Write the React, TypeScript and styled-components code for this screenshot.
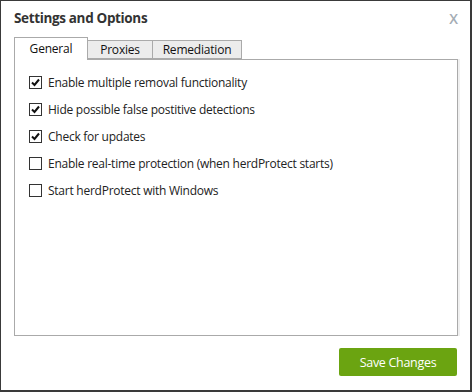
import React from "react";
import styled, { createGlobalStyle } from "styled-components";

const Global = createGlobalStyle`
  html, body { margin: 0; padding: 0; background: #fff; }
  body { font-family: "Open Sans", "Noto Sans", sans-serif; }
`;

const Window = styled.div`
  box-sizing: border-box;
  width: 472px;
  height: 392px;
  border-top: 1px solid #3a3a3a;
  border-left: 1px solid #3a3a3a;
  border-right: 2px solid #3a3a3a;
  border-bottom: 2px solid #3a3a3a;
  background: #fff;
  display: flex;
  flex-direction: column;
  padding: 0 12px 0 13px;
`;

const TitleBar = styled.div`
  display: flex;
  align-items: center;
  justify-content: space-between;
  height: 34px;
  box-sizing: border-box;
`;

const Title = styled.div`
  font-size: 13.5px;
  font-weight: 700;
  color: #333;
  letter-spacing: -0.35px;
`;

const Close = styled.div`
  font-size: 14px;
  font-weight: 600;
  color: #a4acb4;
  margin-right: 0px;
`;

const TabRow = styled.div`
  display: flex;
  align-items: flex-end;
  height: 22px;
  margin-top: 2px;
`;

const Tab = styled.div<{ $active?: boolean; $first?: boolean; $w: number }>`
  box-sizing: border-box;
  height: ${(p) => (p.$active ? "23px" : "19px")};
  width: ${(p) => p.$w}px;
  border: 1px solid #aaa;
  border-bottom: ${(p) => (p.$active ? "none" : "1px solid #aaa")};
  border-left: ${(p) => (p.$first ? "1px solid #aaa" : "none")};
  background: ${(p) => (p.$active ? "#fff" : "#ececec")};
  font-size: 12px;
  letter-spacing: -0.2px;
  color: #111;
  display: flex;
  justify-content: center;
  align-items: ${(p) => (p.$active ? "flex-start" : "center")};
  padding-top: ${(p) => (p.$active ? "2px" : "0")};
  margin-bottom: ${(p) => (p.$active ? "-1px" : "0")};
  position: relative;
  z-index: ${(p) => (p.$active ? 1 : 0)};
`;

const Panel = styled.div`
  box-sizing: border-box;
  width: 444px;
  height: 277px;
  border: 1px solid #aaa;
  box-shadow: 2px 0 0 #f0f0f0;
  padding: 16px 0 0 14px;
  display: flex;
  flex-direction: column;
  gap: 14px;
`;

const Row = styled.label`
  display: flex;
  align-items: center;
  gap: 6px;
  font-size: 12px;
  letter-spacing: -0.25px;
  color: #222;
  height: 13px;
`;

const Box = styled.span`
  box-sizing: border-box;
  width: 13px;
  height: 13px;
  border: 1px solid #333;
  background: #fff;
  display: flex;
  align-items: center;
  justify-content: center;
`;

const Footer = styled.div`
  display: flex;
  justify-content: flex-end;
  padding-top: 12px;
`;

const SaveButton = styled.button`
  width: 118px;
  height: 28px;
  border: none;
  border-radius: 2px;
  background: #6ba411;
  color: #fff;
  font-family: "Open Sans", "Noto Sans", sans-serif;
  font-size: 12.5px;
  letter-spacing: -0.3px;
  cursor: pointer;
  margin-right: 1px;
`;

type T = { label: string; w: number; active?: boolean; first?: boolean };
const tabs: T[] = [
  { label: "General", w: 74, active: true, first: true },
  { label: "Proxies", w: 65 },
  { label: "Remediation", w: 89 },
];

const items = [
  { label: "Enable multiple removal functionality", checked: true },
  { label: "Hide possible false postitive detections", checked: true },
  { label: "Check for updates", checked: true },
  { label: "Enable real-time protection (when herdProtect starts)", checked: false },
  { label: "Start herdProtect with Windows", checked: false },
];

const Check = () => (
  <svg width="9" height="9" viewBox="0 0 9 9">
    <path d="M1 4.5 L3.5 7 L8 1.5" stroke="#111" strokeWidth="2" fill="none" />
  </svg>
);

export default function App() {
  return (
    <>
      <Global />
      <Window>
        <TitleBar>
          <Title>Settings and Options</Title>
          <Close>X</Close>
        </TitleBar>
        <TabRow>
          {tabs.map((t) => (
            <Tab key={t.label} $active={t.active} $first={t.first} $w={t.w}>
              {t.label}
            </Tab>
          ))}
        </TabRow>
        <Panel>
          {items.map((it) => (
            <Row key={it.label}>
              <Box>{it.checked && <Check />}</Box>
              {it.label}
            </Row>
          ))}
        </Panel>
        <Footer>
          <SaveButton>Save Changes</SaveButton>
        </Footer>
      </Window>
    </>
  );
}
